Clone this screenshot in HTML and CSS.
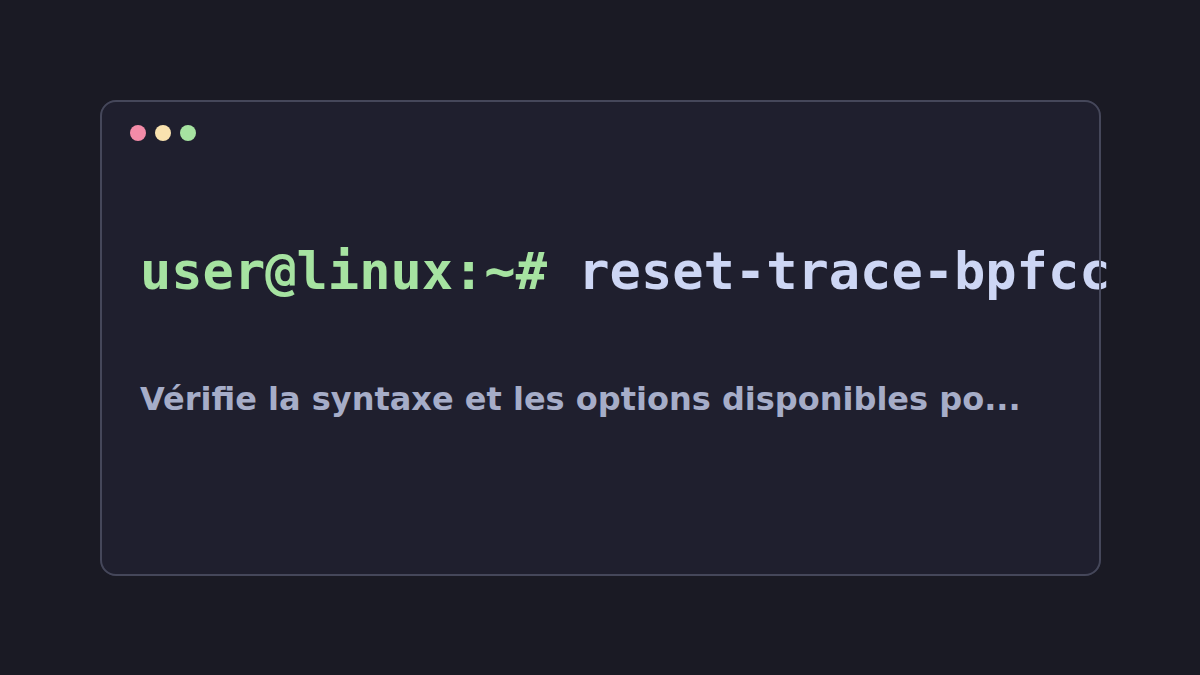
FILE: index.html
```html
<!DOCTYPE html>
<html lang="fr">
<head>
<meta charset="utf-8">
<link rel="stylesheet" href="styles.css">
</head>
<body>
<div class="term">
  <div class="dots">
    <span class="dot red"></span>
    <span class="dot yellow"></span>
    <span class="dot green"></span>
  </div>
  <div class="content">
    <div class="cmd"><span class="prompt">user@linux:~#</span> <span class="name">reset-trace-bpfcc</span></div>
    <div class="desc">Vérifie la syntaxe et les options disponibles po...</div>
  </div>
</div>
</body>
</html>
```
FILE: styles.css
```css
html, body {
  margin: 0;
  padding: 0;
  background: #1a1a24;
}
body {
  width: 1200px;
  height: 675px;
  padding: 100px;
  box-sizing: border-box;
}
.term {
  position: relative;
  width: 1001px;
  height: 476px;
  box-sizing: border-box;
  background: #1f1f2e;
  border-radius: 16px;
  padding: 25px 30px;
  display: flex;
  flex-direction: column;
}
.term::after {
  content: "";
  position: absolute;
  inset: 0;
  border: 2px solid #45475a;
  border-radius: 16px;
  pointer-events: none;
}
.dots {
  display: flex;
  gap: 9px;
}
.dot {
  width: 16px;
  height: 16px;
  border-radius: 50%;
}
.red { background: #f38ba8; }
.yellow { background: #f9e2af; }
.green { background: #a6e3a1; }
.content {
  padding-left: 10px;
}
.cmd {
  margin-top: 100px;
  font-family: "DejaVu Sans Mono", monospace;
  font-weight: bold;
  font-size: 52px;
  line-height: 60px;
  white-space: nowrap;
  color: #cdd6f4;
}
.prompt { color: #a6e3a1; }
.desc {
  margin-top: 78px;
  font-family: "DejaVu Sans", sans-serif;
  font-weight: bold;
  font-size: 32px;
  line-height: 40px;
  color: #a6adc8;
  white-space: nowrap;
}
```
